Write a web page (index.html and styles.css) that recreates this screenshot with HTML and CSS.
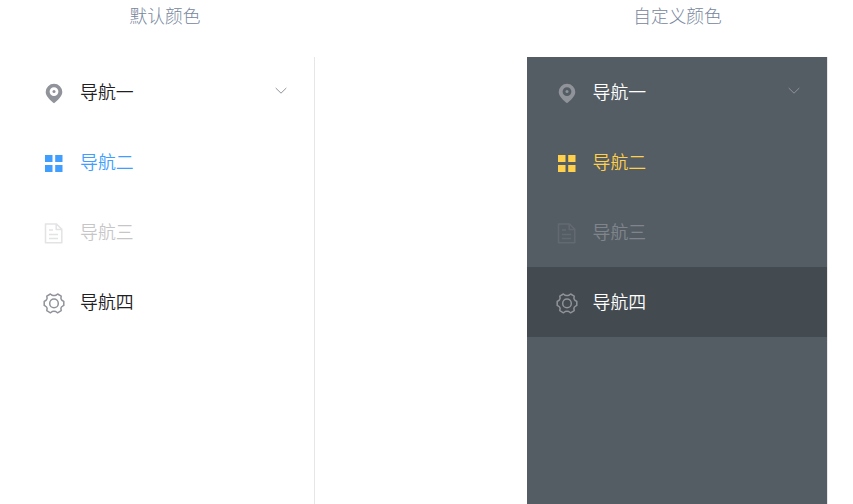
FILE: index.html
```
<!DOCTYPE html>
<html lang="zh-CN">
<head>
<meta charset="utf-8">
<title>导航菜单</title>
<link rel="stylesheet" href="styles.css">
</head>
<body>
<svg class="symbols" aria-hidden="true">
  <symbol id="location" viewBox="0 0 22 22"><path fill="currentColor" fill-rule="evenodd" d="M11 1.800a8.300 8.300 0 0 0-8.300 8.300c0 4.500 5 8.500 8.300 11.200 3.300-2.700 8.300-6.700 8.300-11.200a8.300 8.300 0 0 0-8.300-8.300zm0 3.400a4.400 4.400 0 1 1 0 8.800 4.400 4.400 0 0 1 0-8.800z"/><circle cx="11" cy="9.600" r="1.500" fill="currentColor"/></symbol>
  <symbol id="grid" viewBox="0 0 22 22"><path fill="currentColor" d="M2 3h7.500v7h-7.500zM12.200 3h7.300v7h-7.300zM2 13h7.500v7h-7.500zM12.200 13h7.300v7h-7.300z"/></symbol>
  <symbol id="document" viewBox="0 0 22 22"><path fill="none" stroke="currentColor" stroke-width="1.500" stroke-linejoin="round" d="M2.500 2h11l5.300 5.300v13.400H2.500zM13.200 2.500v5h5M6 8h4M6 12.500h9M6 16.500h9"/></symbol>
  <symbol id="setting" viewBox="0 0 22 22"><g fill="none" stroke="currentColor" stroke-width="1.500" stroke-linejoin="round"><path d="M7.400 2l1.800 1.300q1.800.5 3.600 0L14.600 2l3.600 2.100-.3 2.300q.5 1.700 1.300 2.100l1.600.9v4l-1.600.9q-1 .5-1.300 2.100l.3 2.300-3.600 2.100-1.800-1.300q-1.800-.5-3.600 0l-1.800 1.300-3.600-2.100.3-2.300q-.3-1.600-1.300-2.100l-1.600-.9v-4l1.600-.9q.8-.4 1.300-2.100l-.3-2.300z"/><circle cx="11" cy="11.400" r="4.300"/></g></symbol>
</svg>
<main class="demo">
  <section class="column">
    <h5 class="title">默认颜色</h5>
    <ul class="menu">
      <li class="item"><svg class="icon"><use href="#location"/></svg><span>导航一</span><svg class="arrow" viewBox="0 0 12 8"><path d="M.7 1L6 6.200 11.300 1"/></svg></li>
      <li class="item active"><svg class="icon"><use href="#grid"/></svg><span>导航二</span></li>
      <li class="item disabled"><svg class="icon"><use href="#document"/></svg><span>导航三</span></li>
      <li class="item"><svg class="icon"><use href="#setting"/></svg><span>导航四</span></li>
    </ul>
  </section>
  <section class="column">
    <h5 class="title">自定义颜色</h5>
    <ul class="menu dark">
      <li class="item"><svg class="icon"><use href="#location"/></svg><span>导航一</span><svg class="arrow" viewBox="0 0 12 8"><path d="M.7 1L6 6.200 11.300 1"/></svg></li>
      <li class="item active"><svg class="icon"><use href="#grid"/></svg><span>导航二</span></li>
      <li class="item disabled"><svg class="icon"><use href="#document"/></svg><span>导航三</span></li>
      <li class="item hover"><svg class="icon"><use href="#setting"/></svg><span>导航四</span></li>
    </ul>
  </section>
</main>
</body>
</html>
```
FILE: styles.css
```
* { box-sizing: border-box; }
body { margin: 0; height: 504px; overflow: hidden; background: #fff; font-family: "Liberation Sans", "Noto Sans CJK SC", sans-serif; font-size: 17.9px; }
.symbols { display: none; }
.demo { display: flex; gap: 212px; height: 504px; padding-left: 15px; }
.column { flex: 0 0 300px; display: flex; flex-direction: column; }
.title { margin: 0; height: 57px; line-height: 34px; text-align: center; font-size: 17.7px; font-weight: 300; color: #76869c; }
.menu { flex: 1; margin: 0; padding: 0; list-style: none; border-right: 1px solid #e6e6e6; }
.item { display: flex; align-items: center; height: 70px; padding: 2px 27px 0 28px; color: #1f2023; font-weight: 350; }
.item span { line-height: 26px; }
.icon { flex: none; width: 22px; height: 22px; margin-right: 15px; color: #909399; }
.arrow { width: 12px; height: 8px; margin: -4px 0 0 auto; fill: none; stroke: #909399; stroke-width: 1; }
.active, .active .icon { color: #409eff; }
.disabled { opacity: .25; }
.dark { width: 301px; background: #545c64; color: #fff; }
.dark .item { color: #fff; padding-left: 29px; }
.dark .icon { margin-right: 14.5px; }
.dark .active, .dark .active .icon { color: #ffd04b; }
.dark .hover { background: #434a50; }
```
